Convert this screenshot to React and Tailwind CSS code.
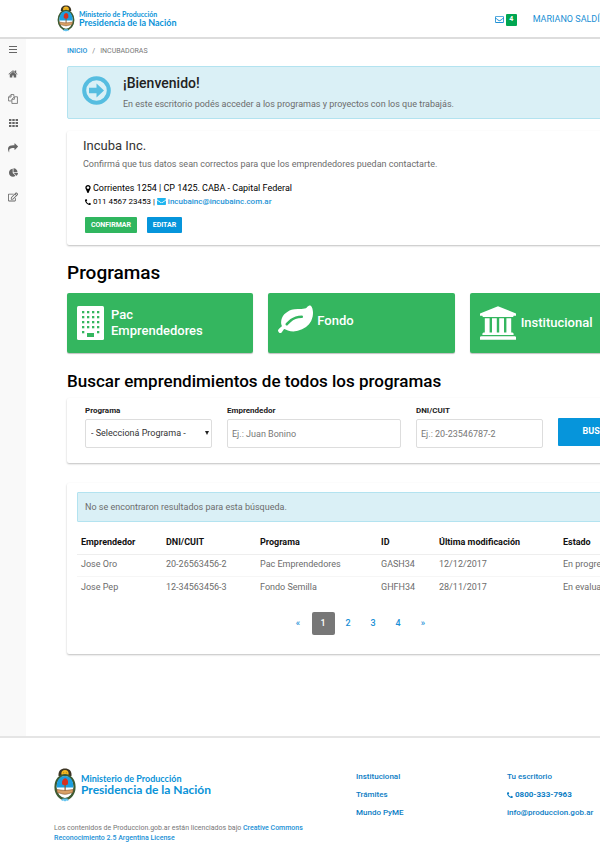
import React from 'react';
import { FaChartPie, FaRegEdit, FaRegEnvelope } from 'react-icons/fa';

const paths = {
  home: 'M1472 992v480q0 26-19 45t-45 19h-384v-384h-256v384h-384q-26 0-45-19t-19-45v-480q0-1 .5-3t.5-3l575-474 575 474q1 2 1 6zm223-69l-62 74q-8 9-21 11h-3q-13 0-21-7l-692-577-692 577q-12 8-24 7-13-2-21-11l-62-74q-8-10-7-23.5t11-21.5l719-599q32-26 76-26t76 26l244 204v-195q0-14 9-23t23-9h192q14 0 23 9t9 23v408l219 182q10 8 11 21.5t-7 23.5z',
  share: 'M1792 640q0 26-19 45l-512 512q-19 19-45 19t-45-19-19-45v-256h-224q-98 0-175.5 6t-154 21.5-133 42.5-105.5 69.5-80 101-48.5 138.5-17.5 181q0 55 5 123 0 6 2.5 23.5t2.5 26.5q0 15-8.5 25t-23.5 10q-16 0-28-17-7-9-13-22t-13.5-30-10.5-24q-127-285-127-451 0-199 53-333 162-403 875-403h224v-256q0-26 19-45t45-19 45 19l512 512q19 19 19 45z',
  marker: 'M1152 640q0-106-75-181t-181-75-181 75-75 181 75 181 181 75 181-75 75-181zm256 0q0 109-33 179l-364 774q-16 33-47.5 52t-67.5 19-67.5-19-46.5-52l-365-774q-33-70-33-179 0-212 150-362t362-150 362 150 150 362z',
  phone: 'M1600 1240q0 27-10 70.5t-21 68.5q-21 50-122 106-94 51-186 51-27 0-53-3.5t-57.5-12.5-47-14.5-55.5-20.5-49-18q-98-35-175-83-127-79-264-216t-216-264q-48-77-83-175-3-9-18-49t-20.5-55.5-14.5-47-12.5-57.5-3.5-53q0-92 51-186 56-101 106-122 25-11 68.5-21t70.5-10q14 0 21 3 18 6 53 76 11 19 30 54t35 63.5 31 53.5q3 4 17.5 25t21.5 35.5 7 28.5q0 20-28.5 50t-62 55-62 53-28.5 46q0 9 5 22.5t8.5 20.5 14 24 11.5 19q76 137 174 235t235 174q2 1 19 11.5t24 14 20.5 8.5 22.5 5q18 0 46-28.5t53-62 55-62 50-28.5q14 0 28.5 7t35.5 21.5 25 17.5q25 15 53.5 31t63.5 35 54 30q70 35 76 53 3 7 3 21z',
  envelope: 'M1792 710v794q0 66-47 113t-113 47h-1472q-66 0-113-47t-47-113v-794q44 49 101 87 362 246 497 345 57 42 92.5 65.5t94.5 48 110 24.5h2q51 0 110-24.5t94.5-48 92.5-65.5q170-123 498-345 57-39 100-87zm0-294q0 79-49 151t-122 123q-376 261-468 325-10 7-42.5 31t-54 38.5-52 32.5-57.5 27-50 9h-2q-23 0-50-9t-57.5-27-52-32.5-54-38.5-42.5-31q-91-64-262-182.5t-205-142.5q-62-42-117-115.5t-55-136.5q0-78 41.5-130t118.5-52h1472q65 0 112.5 47t47.5 113z',
  leaf: 'M1280 704q0-26-19-45t-45-19q-172 0-318 49.5t-259.5 134-235.5 219.5q-19 21-19 45 0 26 19 45t45 19q24 0 45-19 27-24 74-71t67-66q137-124 268.5-176t313.5-52q26 0 45-19t19-45zm512-198q0 95-20 193-46 224-184.5 383t-357.5 268q-214 108-438 108-148 0-286-47-15-5-88-42t-96-37q-16 0-39.5 32t-45 70-52.5 70-60 32q-43 0-63.5-17.5t-45.5-59.5q-2-4-6-11t-5.5-10-3-9.5-1.5-13.5q0-35 31-73.5t68-65.5 68-56 31-48q0-4-14-38t-16-44q-9-51-9-104 0-115 43.5-220t119-184.5 170.5-139 204-95.5q55-18 145-25.5t179.5-9 178.5-6 163.5-24 113.5-56.5l29.5-29.5 29.5-28 27-20 36.5-16 43.5-4.5q39 0 70.5 46t47.5 112 24 124 8 96z',
  university: 'M960 0l960 384v128h-128q0 26-20.5 45t-48.5 19h-1526q-28 0-48.5-19t-20.5-45h-128v-128zm-704 640h256v768h128v-768h256v768h128v-768h256v768h128v-768h256v768h59q28 0 48.5 19t20.5 45v64h-1664v-64q0-26 20.5-45t48.5-19h59v-768zm1595 960q28 0 48.5 19t20.5 45v128h-1920v-128q0-26 20.5-45t48.5-19h1782z',
};

function Glyph({ name, className, viewBox = '0 0 1792 1792' }) {
  return (
    <svg aria-hidden="true" viewBox={viewBox} fill="currentColor" className={className}>
      <path d={paths[name]} />
    </svg>
  );
}

function Crest({ className }) {
  return (
    <svg aria-hidden="true" viewBox="0 0 22 34" className={className}>
      <path d="M4.500 8C4 3 7 .6 11 .6S18 3 17.500 8z" fill="#3d3524" />
      <circle cx="11" cy="5.500" r="3.600" fill="#f5b922" />
      <path d="M9.200 4.800h1M11.800 4.800h1M9.800 6.800h2.400" stroke="#7a5a14" strokeWidth=".6" />
      <ellipse cx="11" cy="19" rx="9.500" ry="12" fill="#fff" stroke="#3c5b33" strokeWidth="2.200" />
      <path d="M2.700 19.500C2.400 12 6 8 11 8s8.600 4 8.300 11.500z" fill="#1d9fe0" />
      <path d="M10.500 14h1.200v12h-1.200z" fill="#8a5a33" />
      <path d="M8.300 16.500c-.8-3 .4-5.800 2.900-6.300 2.600.4 3.500 3.300 2.500 6.300-1.500 1-3.800 1-5.400 0z" fill="#d8301f" />
      <path d="M2.800 21.500c3 .2 5.400 1 8.200 1s5.200-.8 8.200-1l-.6 3.200c-2.700 0-4.500 1.600-7.600 1.600s-4.900-1.600-7.600-1.600z" fill="#d9a066" stroke="#80532c" strokeWidth=".6" />
      <path d="M8.500 30.500h5l1 2.500-2-.6-1.500 1.100-1.500-1.100-2 .6z" fill="#62c3ef" />
    </svg>
  );
}

function FilesIcon() {
  return (
    <svg aria-hidden="true" viewBox="0 0 18 18" fill="none" stroke="currentColor" strokeWidth="1.400" strokeLinejoin="round" className="size-[10px]">
      <path d="M6.500 12.500H1V5.500L5.500 1h5v3.500M5.500 1v4.500H1M7 9.500 11.500 5H17v12H7zM11.500 5v4.500H7" />
    </svg>
  );
}

function BarsIcon() {
  return (
    <svg aria-hidden="true" viewBox="0 0 8 7" className="h-[7px] w-2" fill="currentColor">
      <path d="M0 0h8v1H0zM0 3h8v1H0zM0 6h8v1H0z" />
    </svg>
  );
}

function GridIcon() {
  return (
    <svg aria-hidden="true" viewBox="0 0 9 8" className="h-2 w-[9px]" fill="currentColor">
      {[0, 3, 6].map((y) => [0, 3.3, 6.6].map((x) => <rect key={`${x}-${y}`} x={x} y={y} width="2.400" height="2" />))}
    </svg>
  );
}

function BuildingIcon() {
  return (
    <svg aria-hidden="true" viewBox="0 0 27 34" className="h-[34px] w-[27px]">
      <rect width="27" height="34" rx="1.500" fill="#fff" />
      <g fill="#34b65f">
        {[5, 10, 15, 20].map((y) => [5, 10, 15, 20].map((x) => <rect key={`${x}-${y}`} x={x} y={y} width="2.300" height="2.300" />))}
        <rect x="5" y="25" width="2.300" height="2.300" />
        <rect x="20" y="25" width="2.300" height="2.300" />
        <rect x="10" y="27" width="7" height="4" />
      </g>
    </svg>
  );
}

function ArrowCircle() {
  return (
    <svg aria-hidden="true" viewBox="0 0 29 29" className="size-[29px] shrink-0 text-[#56bde0]">
      <circle cx="14.500" cy="14.500" r="12.300" fill="none" stroke="currentColor" strokeWidth="4" />
      <path d="M7 11.700h7.500V7.500l7.500 7-7.500 7v-4.200H7z" fill="currentColor" />
    </svg>
  );
}

const menu = [
  ['Menú', <BarsIcon />],
  ['Inicio', <Glyph name="home" className="size-[10px]" />],
  ['Documentos', <FilesIcon />],
  ['Programas', <GridIcon />],
  ['Compartir', <Glyph name="share" className="size-[10px]" />],
  ['Estadísticas', <FaChartPie className="size-[9px]" />],
  ['Editar', <FaRegEdit className="size-[10px]" />],
];

const programs = [
  ['Pac Emprendedores', <BuildingIcon />, 'gap-[7px]'],
  ['Fondo', <Glyph name="leaf" viewBox="0 0 1792 1536" className="mb-[6px] h-[30px] w-[35px]" />, 'gap-1 pb-1'],
  ['Institucional', <Glyph name="university" viewBox="0 0 1920 1792" className="h-[34px] w-[36px]" />, 'gap-[5px]'],
];

const columns = ['Emprendedor', 'DNI/CUIT', 'Programa', 'ID', 'Última modificación', 'Estado'];
const results = [
  ['Jose Oro', '20-26563456-2', 'Pac Emprendedores', 'GASH34', '12/12/2017', 'En progreso'],
  ['Jose Pep', '12-34563456-3', 'Fondo Semilla', 'GHFH34', '28/11/2017', 'En evaluación'],
];

const panel = 'rounded-[2px] bg-white shadow-[0_1px_2px_rgba(0,0,0,0.25)]';
const label = 'mb-[3px] block text-[8px] leading-[11px] font-bold text-[#222]';
const field = 'block h-[29px] w-full rounded-[2px] border border-[#ddd] bg-white text-[9px] text-[#333] placeholder:text-[#777]';

export default function App() {
  return (
    <div className="w-full overflow-hidden bg-white font-[Roboto,sans-serif] text-[9px] text-[#6c6c6c]">
      <div className="min-w-[670px]">
        <header className="flex h-[39px] items-center justify-between border-b-2 border-[#ddd] pr-[59px] pl-[57px]">
          <a href="#inicio" className="flex items-center gap-1 pb-px font-[Lato,sans-serif] text-[#0a93d8]">
            <Crest className="h-[27px] w-[18px]" />
            <span className="flex flex-col">
              <span className="text-[7px] leading-[8px] font-bold">Ministerio de Producción</span>
              <span className="text-[9px] leading-[9px] font-bold">Presidencia de la Nación</span>
            </span>
          </a>
          <nav aria-label="Usuario" className="flex items-center gap-4 pt-[2px] text-[#2090d5]">
            <a href="#mensajes" aria-label="Mensajes" className="flex items-center gap-[2px]">
              <FaRegEnvelope className="size-[9px]" />
              <span className="flex h-3 w-[11px] items-center justify-center rounded-[1px] bg-[#00a651] text-[7px] font-bold text-white">4</span>
            </a>
            <a href="#usuario" className="text-[9px]">MARIANO SALDÍAS</a>
          </nav>
        </header>

        <div className="flex">
          <nav aria-label="Principal" className="w-[26px] shrink-0 bg-[#f9f9f9] text-[#666]">
            <ul className="flex h-[169px] flex-col justify-between">
              {menu.map(([name, icon]) => (
                <li key={name}>
                  <a href="#menu" aria-label={name} className="flex h-[21px] items-center justify-center">{icon}</a>
                </li>
              ))}
            </ul>
          </nav>

          <main className="flex-1 pr-[14px] pb-[82px] pl-[41px]">
            <nav aria-label="Ruta" className="flex gap-[5px] pt-[6px] text-[7px] leading-[12px] text-[#777]">
              <a href="#inicio" className="font-medium text-[#1a90d6]">INICIO</a>
              <span>/</span>
              <span>INCUBADORAS</span>
            </nav>

            <section className="mt-[9px] flex h-[53px] items-center gap-3 rounded-[2px] border border-[#b3e3f0] bg-[#daf0f6] pb-1 pl-[14px]">
              <ArrowCircle />
              <div className="pt-[2px]">
                <h2 className="text-[14px] leading-[18px] font-medium text-[#222]">¡Bienvenido!</h2>
                <p className="mt-[6px] leading-[12px]">En este escritorio podés acceder a los programas y proyectos con los que trabajás.</p>
              </div>
            </section>

            <section className={`${panel} mt-3 h-[114px] px-4 pt-[6px]`}>
              <h3 className="text-[13px] leading-[18px] text-[#333]">Incuba Inc.</h3>
              <p className="mt-[3px] leading-[12px]">Confirmá que tus datos sean correctos para que los emprendedores puedan contactarte.</p>
              <div className="mt-3 ml-[2px] leading-[13px] text-black">
                <p className="flex items-center gap-[2px]">
                  <Glyph name="marker" viewBox="384 128 1024 1536" className="h-2 w-[6px]" />
                  Corrientes 1254 | CP 1425. CABA - Capital Federal
                </p>
                <p className="flex items-center gap-[2px] text-[8px]">
                  <Glyph name="phone" viewBox="192 128 1408 1408" className="size-[6px]" />
                  <span>011 4567 23453 |</span>
                  <a href="mailto:incubainc@incubainc.com.ar" className="flex items-center gap-[2px] font-medium text-[#2493d6]">
                    <Glyph name="envelope" viewBox="0 256 1792 1408" className="h-[7px] w-[9px] text-[#1fb5ef]" />
                    incubainc@incubainc.com.ar
                  </a>
                </p>
              </div>
              <div className="mt-[9px] ml-[2px] flex gap-[10px] text-[7px] font-bold text-white">
                <button type="button" className="h-4 w-[52px] rounded-[1px] bg-[#30b65f]">CONFIRMAR</button>
                <button type="button" className="h-4 w-[35px] rounded-[1px] bg-[#0695db]">EDITAR</button>
              </div>
            </section>

            <h1 className="mt-4 text-[19px] leading-6 font-medium text-black">Programas</h1>
            <div className="mt-2 grid grid-cols-3 gap-[15px]">
              {programs.map(([name, icon, spacing]) => (
                <a key={name} href="#programa" className={`flex h-[60px] items-center rounded-[2px] bg-[#34b65f] px-[10px] text-[13px] leading-4 font-medium text-white shadow-[0_1px_1px_rgba(0,0,0,0.25)] ${spacing}`}>
                  <span className="shrink-0">{icon}</span>
                  <span className="w-[100px]">{name}</span>
                </a>
              ))}
            </div>

            <h2 className="mt-[17px] text-[17px] leading-[22px] font-medium text-black">Buscar emprendimientos de todos los programas</h2>
            <form className={`${panel} mt-[6px] grid h-[65px] grid-cols-[127fr_174fr_127fr_84fr] gap-[15px] pt-[7px] pr-[14px] pl-[18px]`} onSubmit={(e) => e.preventDefault()}>
              <div>
                <label htmlFor="programa" className={label}>Programa</label>
                <span className="relative block">
                  <select id="programa" className={`${field} appearance-none px-[5px]`}>
                    <option>- Seleccioná Programa -</option>
                  </select>
                  <svg aria-hidden="true" viewBox="0 0 4 4" className="pointer-events-none absolute top-3 right-[3px] size-1"><path d="M0 0h4L2 4z" fill="#222" /></svg>
                </span>
              </div>
              <div>
                <label htmlFor="emprendedor" className={label}>Emprendedor</label>
                <input id="emprendedor" placeholder="Ej.: Juan Bonino" className={`${field} px-1`} />
              </div>
              <div>
                <label htmlFor="dni" className={label}>DNI/CUIT</label>
                <input id="dni" placeholder="Ej.: 20-23546787-2" className={`${field} px-1`} />
              </div>
              <button type="submit" className="mt-[13px] h-7 rounded-[1px] bg-[#0695db] text-[9px] font-bold text-white">BUSCAR</button>
            </form>

            <section className={`${panel} mt-5 h-[171px] px-[10px] pt-[9px]`}>
              <p className="h-[30px] rounded-[1px] border border-[#b3e3f0] bg-[#daf0f6] px-[7px] leading-[28px]">No se encontraron resultados para esta búsqueda.</p>
              <table className="mt-[10px] w-full table-fixed text-left">
                <colgroup>
                  <col className="w-[85px]" />
                  <col className="w-[94px]" />
                  <col className="w-[121px]" />
                  <col className="w-[58px]" />
                  <col className="w-[124px]" />
                  <col />
                </colgroup>
                <thead>
                  <tr className="h-[22px] border-b border-[#eee] text-[#111]">
                    {columns.map((c) => <th key={c} className="pl-1 font-bold whitespace-nowrap">{c}</th>)}
                  </tr>
                </thead>
                <tbody>
                  {results.map((row) => (
                    <tr key={row[0]} className="h-[22px] border-b border-[#f6f6f6] last:border-0">
                      {row.map((v) => <td key={v} className="pl-1 whitespace-nowrap">{v}</td>)}
                    </tr>
                  ))}
                </tbody>
              </table>
              <nav aria-label="Paginación" className="mt-[14px] flex justify-center gap-[2px] pr-[2px] leading-[23px] font-medium text-[#1a90d6]">
                {['«', '1', '2', '3', '4', '»'].map((p) => (
                  <a key={p} href="#pagina" className={`w-[23px] rounded-[2px] text-center ${p === '1' ? 'bg-[#777] text-white' : ''}`}>{p}</a>
                ))}
              </nav>
            </section>
          </main>
        </div>

        <footer className="grid grid-cols-[2fr_1fr_1fr] border-t-2 border-[#e5e5e5] pt-[30px] pr-3 pb-[22px] pl-[54px]">
          <div>
            <a href="#inicio" className="flex items-center gap-[5px] font-[Lato,sans-serif] text-[#0a93d8]">
              <Crest className="h-[34px] w-[22px]" />
              <span className="flex flex-col">
                <span className="text-[9px] leading-[10px] font-bold">Ministerio de Producción</span>
                <span className="text-[12px] leading-[12px] font-bold">Presidencia de la Nación</span>
              </span>
            </a>
            <p className="mt-[21px] w-[250px] text-[7px] leading-[10px] text-[#777]">
              Los contenidos de Produccion.gob.ar están licenciados bajo{' '}
              <a href="#licencia" className="font-medium text-[#1a90d6]">Creative Commons Reconocimiento 2.5 Argentina License</a>
            </p>
          </div>
          <ul className="text-[8px] leading-[18px] font-medium text-[#0a7cc4]">
            <li><a href="#institucional">Institucional</a></li>
            <li><a href="#tramites">Trámites</a></li>
            <li><a href="#pyme">Mundo PyME</a></li>
          </ul>
          <ul className="text-[8px] leading-[18px] font-medium text-[#0a7cc4]">
            <li><a href="#escritorio">Tu escritorio</a></li>
            <li>
              <a href="tel:08003337963" className="flex items-center gap-[2px] font-bold">
                <Glyph name="phone" viewBox="192 128 1408 1408" className="size-[6px]" />
                0800-333-7963
              </a>
            </li>
            <li><a href="mailto:info@produccion.gob.ar">info@produccion.gob.ar</a></li>
          </ul>
        </footer>
      </div>
    </div>
  );
}
